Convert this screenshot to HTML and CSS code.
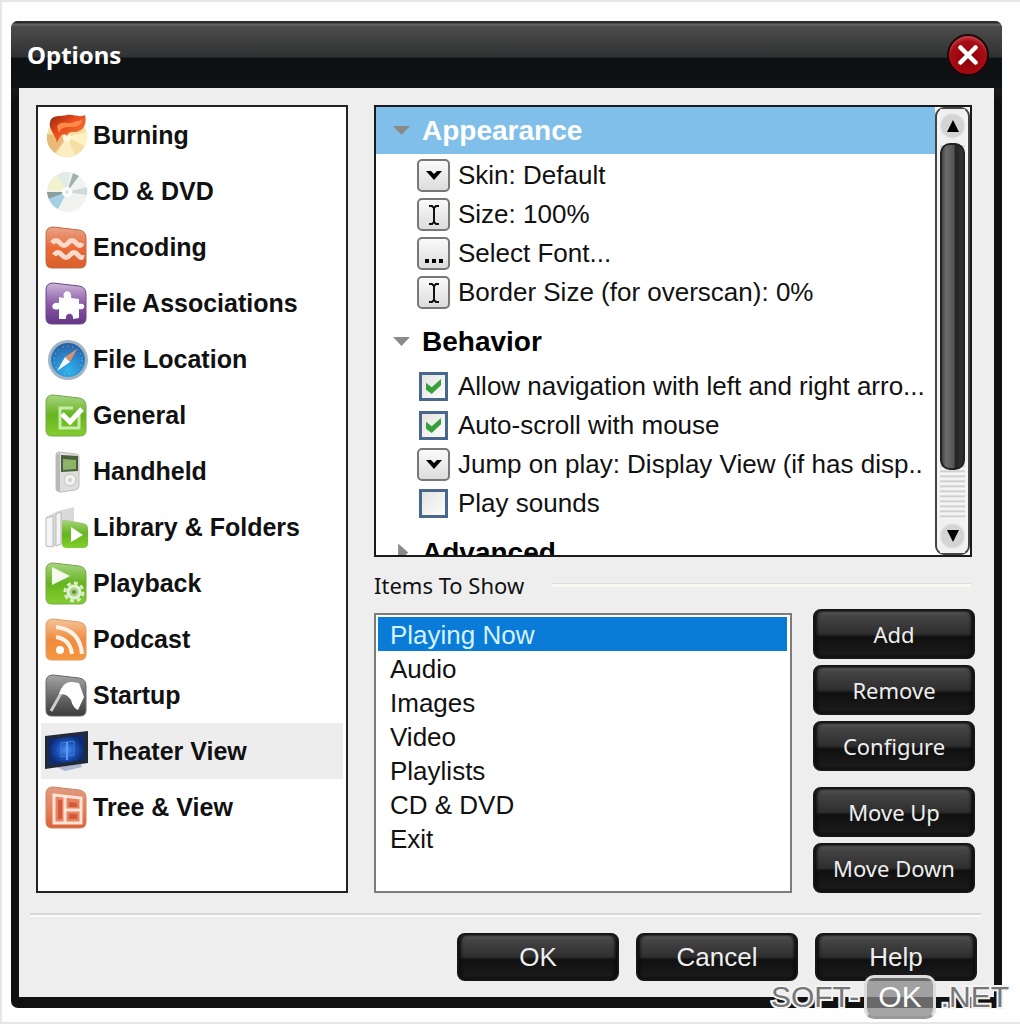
FILE: index.html
```
<!DOCTYPE html>
<html lang="en">
<head>
  <meta charset="UTF-8" />
  <meta name="viewport" content="width=device-width, initial-scale=1.0"/>
  <title>Options</title>
  <link rel="stylesheet" href="styles.css">
</head>
<body>
  <!-- shared gradients and shapes for the category icons -->
  <svg class="defs" aria-hidden="true">
    <defs>
      <linearGradient id="gOrange" x1="0" y1="0" x2="0" y2="1"><stop offset="0" stop-color="#e9a58c"/><stop offset=".5" stop-color="#ea6a38"/><stop offset="1" stop-color="#d8602a"/></linearGradient>
      <linearGradient id="gPurple" x1="0" y1="0" x2="0" y2="1"><stop offset="0" stop-color="#cdb6d8"/><stop offset=".5" stop-color="#8b5ba8"/><stop offset="1" stop-color="#643487"/></linearGradient>
      <linearGradient id="gGreen" x1="0" y1="0" x2="0" y2="1"><stop offset="0" stop-color="#a9d482"/><stop offset=".5" stop-color="#66b41f"/><stop offset="1" stop-color="#84cf2e"/></linearGradient>
      <linearGradient id="gRss" x1="0" y1="0" x2="0" y2="1"><stop offset="0" stop-color="#f6c39b"/><stop offset=".5" stop-color="#f08c40"/><stop offset="1" stop-color="#f6963c"/></linearGradient>
      <linearGradient id="gGray" x1="0" y1="0" x2="0" y2="1"><stop offset="0" stop-color="#a5a5a5"/><stop offset=".5" stop-color="#6c6c6c"/><stop offset="1" stop-color="#3c3c3c"/></linearGradient>
      <linearGradient id="gTree" x1="0" y1="0" x2="0" y2="1"><stop offset="0" stop-color="#df9a80"/><stop offset=".5" stop-color="#e58460"/><stop offset="1" stop-color="#dc6238"/></linearGradient>
      <linearGradient id="gFire" x1="0" y1="0" x2="1" y2="1"><stop offset="0" stop-color="#8c2a10"/><stop offset=".4" stop-color="#e8481a"/><stop offset="1" stop-color="#f29040"/></linearGradient>
      <radialGradient id="gSky" cx=".5" cy=".8" r=".8"><stop offset="0" stop-color="#2fb4ee"/><stop offset=".6" stop-color="#2a82c8"/><stop offset="1" stop-color="#2b5d9c"/></radialGradient>
      <radialGradient id="gScreen"><stop offset="0" stop-color="#4b93f0"/><stop offset=".5" stop-color="#1c55c0"/><stop offset="1" stop-color="#0d2b72"/></radialGradient>
      <path id="tile" d="M1 8Q1 1 8 1L34 4Q41 5 41 12V36Q41 42 35 42H7Q1 42 1 36Z"/>
    </defs>
  </svg>

  <div class="page">
    <div class="dialog">
      <header class="titlebar">
        <h1>Options</h1>
        <button class="close" aria-label="Close">
          <svg viewBox="0 0 40 40" width="20" height="20" aria-hidden="true"><path d="M5 5L35 35M35 5L5 35" stroke="#fff" stroke-width="9" stroke-linecap="round"/></svg>
        </button>
      </header>

      <main class="body">
        <div class="columns">
          <nav class="categories">
            <a href="#burning">
              <svg viewBox="0 0 43 43" aria-hidden="true"><circle cx="22" cy="23" r="20" fill="#f6dfa4"/><path d="M22 23L2 20A20 20 0 0 0 10 39Z" fill="#eab978"/><path d="M22 23L42 18A20 20 0 0 1 40 32Z" fill="#fff3c4"/><path d="M22 23L12 40A20 20 0 0 0 30 41Z" fill="#fbeec0"/><circle cx="22" cy="24" r="4" fill="#fff8e0"/><path d="M12 29C11 21 3 15 5 8C7 0 16 3 22 1C29 0 34 4 40 1C42 9 39 17 31 18C26 18 24 17 22 22C19 18 15 21 12 29Z" fill="url(#gFire)"/><path d="M12 12C17 6 23 11 29 8C33 6 36 8 38 4C37 10 33 13 28 13C21 13 17 12 14 19Z" fill="#ff8a48"/></svg>
              Burning</a>
            <a href="#cd">
              <svg viewBox="0 0 43 43" aria-hidden="true"><circle cx="22" cy="22" r="20" fill="#f1f3f1"/><path d="M22 22L2 20A20 20 0 0 1 12 5Z" fill="#f1f3cf"/><path d="M22 22L12 5A20 20 0 0 1 25 2Z" fill="#e2ece6"/><path d="M22 22L28 3L34 6Z" fill="#9fb3ac"/><path d="M22 22L42 17A20 20 0 0 1 42 25Z" fill="#d0dad8"/><path d="M22 22L2 22A20 20 0 0 0 4 29Z" fill="#8a9c9c"/><path d="M22 22L4 29A20 20 0 0 0 13 39Z" fill="#a4cfe4"/><circle cx="22" cy="22" r="5" fill="#fff"/><circle cx="22" cy="22" r="2" fill="#e2e6e4"/></svg>
              CD &amp; DVD</a>
            <a href="#encoding">
              <svg viewBox="0 0 43 43" aria-hidden="true"><use href="#tile" fill="url(#gOrange)" stroke="#c46a48"/><path d="M7 17q4-5 8 0t8 0t8 0t6 0M9 29q4-5 8 0t8 0t8 0t4 0" fill="none" stroke="#fbd9cb" stroke-width="5"/></svg>
              Encoding</a>
            <a href="#associations">
              <svg viewBox="0 0 43 43" aria-hidden="true"><use href="#tile" fill="url(#gPurple)" stroke="#6c4488"/><path d="M19 16C16 7 28 7 26 16L34 17V22C41 20 41 29 34 27V36L28 37C29 30 20 30 21 37H14V27C5 30 5 19 14 21V15Z" fill="#fff"/></svg>
              File Associations</a>
            <a href="#location">
              <svg viewBox="0 0 43 43" aria-hidden="true"><circle cx="23" cy="22" r="20" fill="#9fb4c4"/><circle cx="23" cy="22" r="17" fill="url(#gSky)"/><circle cx="23" cy="22" r="14" fill="none" stroke="#8fd0f2" stroke-dasharray="1 4"/><path d="M32 11L25 24L20 19Z" fill="#e0906c"/><path d="M12 33L20 19L25 24Z" fill="#f4faff"/></svg>
              File Location</a>
            <a href="#general">
              <svg viewBox="0 0 43 43" aria-hidden="true"><use href="#tile" fill="url(#gGreen)" stroke="#74a84a"/><path d="M34 20V34H15V14H28" fill="none" stroke="#c8ecaa" stroke-width="3"/><path d="M17 20L25 28L37 15" fill="none" stroke="#fff" stroke-width="5"/></svg>
              General</a>
            <a href="#handheld">
              <svg viewBox="0 0 43 43" aria-hidden="true"><path d="M11 5Q11 2 14 2L31 4Q34 4 34 7V36Q34 39 30 40L16 42Q11 42 11 38Z" fill="#dededc" stroke="#bcbcbc"/><path d="M11 5L15 3V42Q11 42 11 38Z" fill="#b8b8b6"/><path d="M16 5L33 6V21L16 22Z" fill="#4a5f3c"/><path d="M18 9L31 10V19L18 20Z" fill="#8cb468"/><circle cx="25" cy="30" r="6" fill="#f2f2f0" stroke="#bdbdbb"/><circle cx="25" cy="30" r="2" fill="#d0d0ce"/></svg>
              Handheld</a>
            <a href="#library">
              <svg viewBox="0 0 43 43" aria-hidden="true"><path d="M1 11L13 5L29 1V30L13 40L1 41Z" fill="#d9d9d9"/><path d="M1 12L8 10V41L1 40ZM11 8L16 6V38L11 40Z" fill="#f4f4f4" stroke="#bbb"/><path d="M17 16Q17 13 21 14L38 17Q43 18 43 22V38Q43 42 38 42H22Q17 42 17 38Z" fill="url(#gGreen)"/><path d="M26 21L38 29L26 36Z" fill="#fff"/></svg>
              Library &amp; Folders</a>
            <a href="#playback">
              <svg viewBox="0 0 43 43" aria-hidden="true"><use href="#tile" fill="url(#gGreen)" stroke="#74a84a"/><path d="M7 5L25 14L7 23Z" fill="#f4fbee"/><circle cx="29" cy="30" r="9" fill="none" stroke="#d9efc6" stroke-width="3" stroke-dasharray="4 3"/><circle cx="29" cy="30" r="6" fill="#a8cf88" stroke="#e2f2d4" stroke-width="3"/><circle cx="29" cy="30" r="2" fill="#5f9430"/></svg>
              Playback</a>
            <a href="#podcast">
              <svg viewBox="0 0 43 43" aria-hidden="true"><use href="#tile" fill="url(#gRss)" stroke="#e09a60"/><circle cx="15" cy="32" r="4" fill="#fff"/><path d="M11 19Q25 21 27 36M11 9Q35 12 37 36" fill="none" stroke="#fff3e8" stroke-width="4"/></svg>
              Podcast</a>
            <a href="#startup">
              <svg viewBox="0 0 43 43" aria-hidden="true"><use href="#tile" fill="url(#gGray)" stroke="#666"/><path d="M6 37L19 14" stroke="#ccc" stroke-width="3"/><path d="M14 20Q18 7 27 8L34 9L39 23L33 36Q28 34 26 26Q22 19 14 20Z" fill="#fff"/></svg>
              Startup</a>
            <a href="#theater" class="selected" aria-current="page">
              <svg viewBox="0 0 43 43" aria-hidden="true"><path d="M12 37L36 34L37 37L20 41Z" fill="#a9b8d0"/><path d="M0 6L43 1V33L0 39Z" fill="#222a38"/><path d="M4 9L39 5V30L4 35Z" fill="url(#gScreen)"/><path d="M16 13L29 11V25L16 27Z" fill="none" stroke="#3f7fd8"/><path d="M22 12V30" stroke="#5b9cf0" stroke-width="2"/></svg>
              Theater View</a>
            <a href="#tree">
              <svg viewBox="0 0 43 43" aria-hidden="true"><use href="#tile" fill="url(#gTree)" stroke="#d08060"/><path d="M9 9L36 12V37H9Z" fill="#e7825f" stroke="#fde3d8" stroke-width="3"/><path d="M20 11V37M20 24H36" stroke="#fde3d8" stroke-width="3"/><path d="M13 14H17V33H13ZM24 16L32 17V21H24ZM24 28H32V33H24Z" fill="#d4583a"/></svg>
              Tree &amp; View</a>
          </nav>

          <div class="details">
            <div class="settings">
              <div class="tree">
                <section>
                  <h2 class="active"><span class="arrow"></span>Appearance</h2>
                  <div class="rows">
                    <div class="row"><button id="skin" class="ctl"><svg viewBox="0 0 16 10" width="16" height="10" aria-hidden="true"><path d="M0 0H5L8 3L11 0H16L8 9Z"/></svg></button><label for="skin">Skin: Default</label></div>
                    <div class="row"><button id="size" class="ctl"><svg viewBox="0 0 12 20" width="12" height="20" aria-hidden="true"><path d="M1 1H4L6 3L8 1H11M6 3V17M1 19H4L6 17L8 19H11" fill="none" stroke="#111" stroke-width="2"/></svg></button><label for="size">Size: 100%</label></div>
                    <div class="row"><button id="font" class="ctl"><svg viewBox="0 0 18 20" width="18" height="20" aria-hidden="true"><path d="M0 15H4V19H0ZM7 15H11V19H7ZM14 15H18V19H14Z"/></svg></button><label for="font">Select Font...</label></div>
                    <div class="row"><button id="border" class="ctl"><svg viewBox="0 0 12 20" width="12" height="20" aria-hidden="true"><path d="M1 1H4L6 3L8 1H11M6 3V17M1 19H4L6 17L8 19H11" fill="none" stroke="#111" stroke-width="2"/></svg></button><label for="border">Border Size (for overscan): 0%</label></div>
                  </div>
                </section>
                <section>
                  <h2><span class="arrow"></span>Behavior</h2>
                  <div class="rows">
                    <div class="row"><input type="checkbox" id="nav" checked><label for="nav">Allow navigation with left and right arro...</label></div>
                    <div class="row"><input type="checkbox" id="scroll" checked><label for="scroll">Auto-scroll with mouse</label></div>
                    <div class="row"><button id="jump" class="ctl"><svg viewBox="0 0 16 10" width="16" height="10" aria-hidden="true"><path d="M0 0H5L8 3L11 0H16L8 9Z"/></svg></button><label for="jump">Jump on play: Display View (if has disp..</label></div>
                    <div class="row"><input type="checkbox" id="sounds"><label for="sounds">Play sounds</label></div>
                  </div>
                </section>
                <section>
                  <h2><span class="arrow closed"></span>Advanced</h2>
                </section>
              </div>
              <div class="scrollbar">
                <button aria-label="Scroll up"><svg viewBox="0 0 12 12" width="12" height="12" aria-hidden="true"><path d="M6 0L12 12H0Z"/></svg></button>
                <div class="track"><div class="thumb"></div></div>
                <button aria-label="Scroll down"><svg viewBox="0 0 12 12" width="12" height="12" aria-hidden="true"><path d="M6 12L12 0H0Z"/></svg></button>
              </div>
            </div>

            <div class="group-title"><label for="items">Items To Show</label></div>

            <div class="items">
              <select id="items" size="7">
                <option selected>Playing Now</option>
                <option>Audio</option>
                <option>Images</option>
                <option>Video</option>
                <option>Playlists</option>
                <option>CD &amp; DVD</option>
                <option>Exit</option>
              </select>
              <div class="actions">
                <button class="btn">Add</button>
                <button class="btn">Remove</button>
                <button class="btn">Configure</button>
                <button class="btn move">Move Up</button>
                <button class="btn">Move Down</button>
              </div>
            </div>
          </div>
        </div>

        <footer class="footer">
          <button class="btn">OK</button>
          <button class="btn">Cancel</button>
          <button class="btn">Help</button>
        </footer>
      </main>
    </div>

    <div class="watermark"><span>SOFT-</span><span class="badge">OK</span><span>.NET</span></div>
  </div>
</body>
</html>
```

FILE: styles.css
```
* {
  box-sizing: border-box;
}
body {
  margin: 0;
  font-family: "Liberation Sans", Arial, sans-serif;
  font-size: 26px;
  color: #111;
  background: #fefefe;
}
button, select, input {
  font: inherit;
  margin: 0;
}
.defs {
  position: absolute;
  width: 0;
  height: 0;
}
.page {
  position: relative;
  min-height: 100vh;
  padding: 19px 18px 13px 9px;
  border: 2px solid #e6e6e6;
  border-right: none;
}

.dialog {
  padding: 0 8px 11px;
  background: linear-gradient(#4a4a4a, #111 80px);
  border-radius: 7px;
}
.titlebar {
  display: flex;
  align-items: center;
  justify-content: space-between;
  height: 67px;
  margin: 0 -8px;
  padding: 0 13px 0 16px;
  border-radius: 7px 7px 0 0;
  background: linear-gradient(#2c2c2c 0, #2c2c2c 2px, #666 3px, #4b4b4b 6px, #303132 36px, #0e1113 37px, #0f1214 67px);
}
h1 {
  margin: 0;
  font: bold 24px "Noto Sans", Tahoma, sans-serif;
  color: #fff;
}
.close {
  display: flex;
  align-items: center;
  justify-content: center;
  width: 42px;
  height: 42px;
  padding: 0;
  border: 2px solid #1c0608;
  border-radius: 50%;
  background: radial-gradient(circle at 50% 60%, #8c0008 0, #a80c14 60%, #d0505a 80%, #7c0a10 100%);
}

.body {
  padding: 17px 17px 16px;
  background: #eee;
}
.columns {
  display: flex;
  gap: 26px;
  padding-right: 2px;
}

.categories {
  flex: 0 0 312px;
  padding: 0 3px;
  border: 2px solid #222;
  background: #fff;
}
.categories a {
  display: flex;
  align-items: center;
  gap: 5px;
  height: 56px;
  padding-left: 4px;
  font-size: 25px;
  font-weight: bold;
  color: #111;
  text-decoration: none;
}
.categories a.selected {
  background: #ededed;
}
.categories svg {
  width: 43px;
  height: 43px;
}

.details {
  flex: 1;
  min-width: 0;
}
.settings {
  display: flex;
  height: 452px;
  margin-right: 3px;
  border: 2px solid #1a1a1a;
  background: #fff;
}
.tree {
  flex: 1;
  min-width: 0;
  overflow: hidden;
}
h2 {
  display: flex;
  align-items: center;
  gap: 12px;
  height: 47px;
  margin: 0;
  padding-left: 17px;
  font-size: 28px;
  color: #000;
}
h2.active {
  background: #80bfe9;
  color: #fff;
}
.arrow {
  width: 17px;
  height: 9px;
  background: #8a8a8a;
  clip-path: polygon(0 0, 100% 0, 50% 100%);
}
.arrow.closed {
  height: 18px;
  clip-path: polygon(30% 0, 90% 50%, 30% 100%);
}
.rows {
  padding: 2px 0 6px 41px;
}
.row {
  display: flex;
  align-items: center;
  gap: 8px;
  height: 39px;
}
.row label {
  flex: 1;
  overflow: hidden;
  white-space: nowrap;
}
.ctl {
  display: flex;
  align-items: center;
  justify-content: center;
  flex: 0 0 33px;
  height: 33px;
  padding: 0;
  border: 2px solid #777;
  border-radius: 5px;
  background: linear-gradient(#fafafa, #dcdcdc);
}
.row input {
  appearance: none;
  flex: 0 0 29px;
  height: 29px;
  margin: 0 2px;
  padding: 4px;
  border: 3px solid #47688c;
  background: linear-gradient(135deg, #e4e4e0, #fcfcfc);
}
.row input:checked::after {
  content: "";
  display: block;
  height: 15px;
  background: #36a03c;
  clip-path: polygon(0 25%, 38% 55%, 100% 0, 100% 42%, 38% 100%, 0 72%);
}

.scrollbar {
  display: flex;
  flex-direction: column;
  flex: 0 0 35px;
  padding: 0 3px;
  border: 2px solid #444;
  border-radius: 9px;
  background: #f4f4f4;
}
.scrollbar button {
  display: flex;
  align-items: center;
  justify-content: center;
  width: 25px;
  height: 34px;
  padding: 0;
  border: none;
  background: radial-gradient(circle, #d4d4d4 11px, #f0f0f0 13px);
}
.track {
  flex: 1;
  background: repeating-linear-gradient(#f4f4f4 0, #f4f4f4 2px, #c4c4c4 3px, #f4f4f4 5px);
}
.thumb {
  height: 87%;
  border: 2px solid #222;
  border-radius: 10px;
  background: linear-gradient(to right, #444, #6c6c6c 20%, #555 55%, #242424 65%, #333);
}

.group-title {
  display: flex;
  align-items: center;
  gap: 28px;
  height: 52px;
  padding-top: 3px;
  font: 22px "Noto Sans", Tahoma, sans-serif;
}
.group-title::after {
  content: "";
  flex: 1;
  height: 3px;
  margin-right: 4px;
  background: #faf8f2;
  border-top: 1px solid #ddd;
}
.items {
  display: flex;
  gap: 21px;
}
.items select {
  flex: 1;
  min-width: 0;
  margin-top: 4px;
  padding: 2px 3px 2px 2px;
  border: 2px solid #7c7c7c;
  border-radius: 0;
  outline: none;
  overflow: hidden;
  background: #fff;
  color: #111;
}
.items option {
  min-height: 34px;
  padding: 3px 12px 0;
}
.items option:checked {
  background: linear-gradient(#0a7cd8, #0a7cd8);
  -webkit-text-fill-color: #d4f2ff;
}
.actions {
  display: flex;
  flex-direction: column;
  gap: 6px;
  width: 162px;
}
.btn {
  height: 50px;
  padding: 0;
  border: 2px solid #161616;
  border-radius: 8px;
  background: linear-gradient(#686868 0, #464646 4px, #2e2e2e 50%, #101010 56%, #1c1c1c 100%);
  box-shadow: inset 2px 0 3px #0c0c0c, inset -2px 0 3px #0c0c0c;
  color: #eee;
}
.actions .btn {
  font: 22px "Noto Sans", Tahoma, sans-serif;
}
.actions .move {
  margin-top: 10px;
}

.footer {
  display: flex;
  justify-content: flex-end;
  gap: 17px;
  margin: 20px -4px 0 -6px;
  padding: 18px 4px 0 0;
  border-top: 2px solid #d8d8d8;
  box-shadow: inset 0 2px 0 #fafafa;
}
.footer .btn {
  width: 162px;
  height: 48px;
}

/* site mark in the corner, lies over the dialog edge */
.watermark {
  position: absolute;
  right: 11px;
  bottom: 3px;
  display: flex;
  align-items: center;
  gap: 5px;
  font-size: 30px;
  color: #777;
  -webkit-text-stroke: 4px #f4f4f4;
  paint-order: stroke fill;
}
.watermark .badge {
  padding: 2px 11px;
  border: 3px solid #ddd;
  border-bottom-color: #999;
  border-radius: 10px;
  background: rgba(135, 135, 135, 0.75);
  color: #fff;
  -webkit-text-stroke: 0;
}
```
